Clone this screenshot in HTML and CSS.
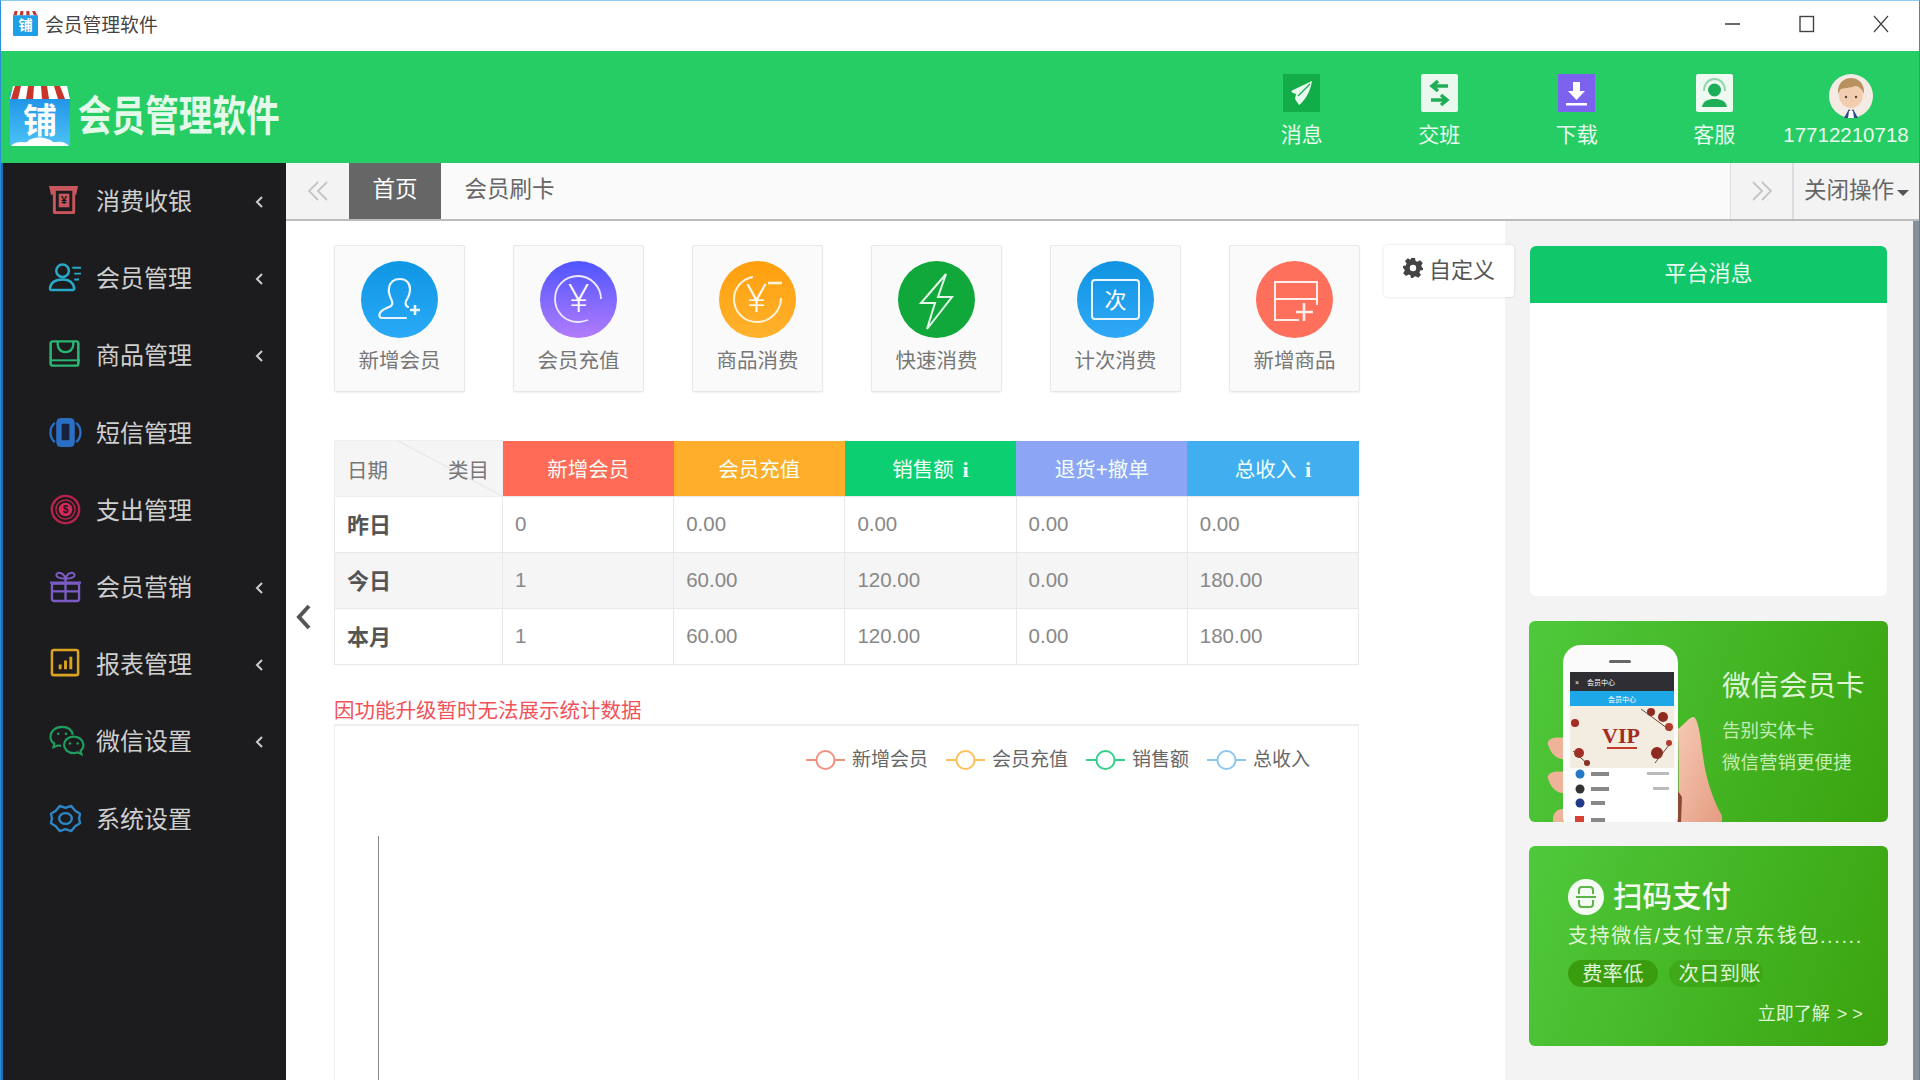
FILE: index.html
```html
<!DOCTYPE html>
<html lang="zh-CN">
<head>
<meta charset="UTF-8">
<title>会员管理软件</title>
<link rel="stylesheet" href="styles.css">
</head>
<body>
<div class="window">

    <div class="titlebar">
        <svg class="title-logo" viewBox="0 0 60 60">
            <rect y="6" width="60" height="54" rx="3" fill="#1f9fe8"/>
            <path d="M2 0h56l2 10H0z" fill="#fff"/>
            <path d="M4 0h7l-2 10H1zM18 0h7l-1 10h-8zM32 0h7l1 10h-8zM46 0h7l5 10h-8z" fill="#c8342c"/>
            <text x="30" y="46" class="logo-char">铺</text>
        </svg>
        <span class="title-text">会员管理软件</span>
        <div class="win-controls">
            <svg width="16" height="18" viewBox="0 0 16 18"><path d="M0 9h15" stroke="#444" stroke-width="1.6"/></svg>
            <svg width="16" height="18" viewBox="0 0 16 18"><rect x="1" y="1.5" width="13.5" height="15" fill="none" stroke="#444" stroke-width="1.4"/></svg>
            <svg width="16" height="18" viewBox="0 0 16 18"><path d="M1 1l14 16M15 1L1 17" stroke="#444" stroke-width="1.2"/></svg>
        </div>
    </div>

    <div class="header">
        <svg class="brand-logo" viewBox="0 0 60 60">
            <defs>
                <linearGradient id="logoBg" x1="0" y1="0" x2="0" y2="1">
                    <stop offset="0" stop-color="#1b8fe6"/>
                    <stop offset="1" stop-color="#4cc2f5"/>
                </linearGradient>
            </defs>
            <rect y="6" width="60" height="54" rx="2" fill="url(#logoBg)"/>
            <path d="M3 0h54l3 13H0z" fill="#fff"/>
            <path d="M5 0h6l-3 13H1zM18 0h6l-1 13h-7zM31 0h6l2 13h-7zM44 0h6l5 13h-7z" fill="#c8342c"/>
            <path d="M1 60c6-6 12-3 16-4 4-6 20-6 26 0 6 0 10-2 16 4z" fill="#fff"/>
            <text x="30" y="47" class="logo-char">铺</text>
        </svg>
        <div class="brand-name">会员管理软件</div>

        <div class="tools">
            <div class="tool">
                <svg class="tool-icon" viewBox="0 0 37 38">
                    <rect width="37" height="38" fill="#12ad48"/>
                    <path d="M29 7L10 16c-2 1-2 2 0 3l3 1-1 5 4 6c2-1 3-3 5-5 4-5 7-12 8-19z" fill="#eafaf0"/>
                    <path d="M27 10L15 22" stroke="#12ad48" stroke-width="1.2"/>
                </svg>
                <span>消息</span>
            </div>
            <div class="tool">
                <svg class="tool-icon" viewBox="0 0 37 38">
                    <rect width="37" height="38" rx="2" fill="#eaf8ef"/>
                    <path d="M27 12H13M17 7l-6 5 6 5" fill="none" stroke="#1fae58" stroke-width="3.4"/>
                    <path d="M10 26h14M20 21l6 5-6 5" fill="none" stroke="#1fae58" stroke-width="3.4"/>
                </svg>
                <span>交班</span>
            </div>
            <div class="tool">
                <svg class="tool-icon" viewBox="0 0 37 38">
                    <rect width="37" height="38" fill="#7d62f0"/>
                    <path d="M15 8h7v9h5l-8.500 9-8.500-9h5z" fill="#fff"/>
                    <rect x="8" y="29" width="21" height="2.500" fill="#fff"/>
                </svg>
                <span>下载</span>
            </div>
            <div class="tool">
                <svg class="tool-icon" viewBox="0 0 37 38">
                    <rect width="37" height="38" rx="2" fill="#eef9f2"/>
                    <circle cx="18.500" cy="16" r="6.500" fill="#1fae58"/>
                    <path d="M8 17c0-16 21-16 21 0" fill="none" stroke="#8ed8aa" stroke-width="2"/>
                    <path d="M6 33c1-6 6-8 12.500-8S30 27 31 33z" fill="#1fae58"/>
                </svg>
                <span>客服</span>
            </div>
            <div class="tool tool-user">
                <svg class="avatar" viewBox="0 0 44 44">
                    <ellipse cx="22" cy="22" rx="22" ry="22" fill="#f5ebe5"/>
                    <ellipse cx="22" cy="21" rx="12" ry="13" fill="#f3cdb0"/>
                    <path d="M9 20C8 8 16 4 22 4s14 4 13 16c-2-5-5-8-9-8-5 2-12 2-14 3-1 1-2 3-3 5z" fill="#b9915f"/>
                    <circle cx="17" cy="23" r="1.200" fill="#5c4433"/>
                    <circle cx="27" cy="23" r="1.200" fill="#5c4433"/>
                    <path d="M15 44l5-9 2 3 2-3 5 9z" fill="#2c4a8c"/>
                    <path d="M20 37h4l1 7h-6z" fill="#fff"/>
                </svg>
                <span>17712210718</span>
            </div>
        </div>
    </div>

    <div class="main">
        <ul class="sidebar">
            <li class="nav-item">
                <svg class="nav-icon" viewBox="0 0 34 32"><path d="M0 1h30l-2 9h-1v18a2 2 0 0 1-2 2H6a2 2 0 0 1-2-2V10H2z" fill="#c9565c"/><path d="M7 6h17v21H7z" fill="#1c1c1e"/><rect x="10" y="9" width="11" height="14" fill="#c9565c"/><text x="15.500" y="20" class="nav-coin">¥</text></svg>
                <span class="nav-label">消费收银</span>
                <svg class="nav-arrow" viewBox="0 0 8 12"><path d="M7 1L2 6l5 5" fill="none" stroke="#ccc" stroke-width="2"/></svg>
            </li>
            <li class="nav-item">
                <svg class="nav-icon" viewBox="0 0 34 32"><circle cx="14" cy="9" r="6.500" fill="none" stroke="#27a9c9" stroke-width="2.600"/><path d="M1 27c1-7 6-9 13-9 6 0 11 2 12 9 0 2-2 2-3 2H4c-2 0-3 0-3-2z" fill="none" stroke="#27a9c9" stroke-width="2.600"/><path d="M24 6h9M26 12h7M26 18h5" stroke="#27a9c9" stroke-width="2"/></svg>
                <span class="nav-label">会员管理</span>
                <svg class="nav-arrow" viewBox="0 0 8 12"><path d="M7 1L2 6l5 5" fill="none" stroke="#ccc" stroke-width="2"/></svg>
            </li>
            <li class="nav-item">
                <svg class="nav-icon" viewBox="0 0 34 32"><rect x="1.500" y="2.500" width="26" height="25" rx="2" fill="none" stroke="#2bb673" stroke-width="2.400" transform="scale(1.100 1)"/><path d="M2 22h30" stroke="#2bb673" stroke-width="2"/><path d="M9 3v3c0 10 16 10 16 0V3" fill="none" stroke="#2bb673" stroke-width="2.400"/></svg>
                <span class="nav-label">商品管理</span>
                <svg class="nav-arrow" viewBox="0 0 8 12"><path d="M7 1L2 6l5 5" fill="none" stroke="#ccc" stroke-width="2"/></svg>
            </li>
            <li class="nav-item">
                <svg class="nav-icon" viewBox="0 0 34 32"><rect x="8" y="1.500" width="18" height="29" rx="4" fill="#2a6fc4" stroke="#2a6fc4"/><rect x="13" y="7" width="8" height="17" rx="1" fill="#16233a"/><path d="M6 6C0 11 0 21 6 26M28 6c6 5 6 15 0 20" fill="none" stroke="#2a6fc4" stroke-width="2.400"/></svg>
                <span class="nav-label">短信管理</span>
            </li>
            <li class="nav-item">
                <svg class="nav-icon" viewBox="0 0 34 34"><circle cx="17" cy="17" r="15" fill="none" stroke="#b9224c" stroke-width="2.600"/><circle cx="17" cy="17" r="10.500" fill="none" stroke="#b9224c" stroke-width="1.600"/><circle cx="17" cy="17" r="7.500" fill="#d8285a"/><text x="17" y="21" class="nav-coin">$</text></svg>
                <span class="nav-label">支出管理</span>
            </li>
            <li class="nav-item">
                <svg class="nav-icon" viewBox="0 0 34 32"><rect x="3" y="13" width="28" height="18" rx="2" fill="none" stroke="#7c5cc4" stroke-width="2.400"/><path d="M1 12h32M17 6v25M3 21h28" stroke="#7c5cc4" stroke-width="2.400"/><path d="M17 8C11 8 6 6 8 3s8 0 9 5c1-5 7-8 9-5s-3 5-9 5z" fill="none" stroke="#7c5cc4" stroke-width="2"/></svg>
                <span class="nav-label">会员营销</span>
                <svg class="nav-arrow" viewBox="0 0 8 12"><path d="M7 1L2 6l5 5" fill="none" stroke="#ccc" stroke-width="2"/></svg>
            </li>
            <li class="nav-item">
                <svg class="nav-icon" viewBox="0 0 34 32"><rect x="3" y="2" width="27" height="26" rx="2" fill="none" stroke="#d9a520" stroke-width="2.600"/><path d="M10 17h3v5h-3zM15.500 13h3v9h-3zM21 9h3v13h-3z" fill="#d9a520"/></svg>
                <span class="nav-label">报表管理</span>
                <svg class="nav-arrow" viewBox="0 0 8 12"><path d="M7 1L2 6l5 5" fill="none" stroke="#ccc" stroke-width="2"/></svg>
            </li>
            <li class="nav-item">
                <svg class="nav-icon" viewBox="0 0 33 32"><path d="M13 2C6 2 1 6.500 1 12c0 3 2 6 4 7l-1 4 5-2c1 .500 2 .500 3 .500" fill="none" stroke="#1f9e5f" stroke-width="2.200"/><path d="M25 12c-6 0-10 4-10 8.500S19 29 25 29c1.500 0 3-.300 4-.800l4 2-1-3.500c2-1.500 3-3.500 3-6C35 16 31 12 25 12zM24 10c-1-5-5-8-11-8" fill="none" stroke="#1f9e5f" stroke-width="2.200"/><circle cx="9" cy="9" r="1.300" fill="#1f9e5f"/><circle cx="17" cy="9" r="1.300" fill="#1f9e5f"/><circle cx="21" cy="19" r="1.300" fill="#1f9e5f"/><circle cx="29" cy="19" r="1.300" fill="#1f9e5f"/></svg>
                <span class="nav-label">微信设置</span>
                <svg class="nav-arrow" viewBox="0 0 8 12"><path d="M7 1L2 6l5 5" fill="none" stroke="#ccc" stroke-width="2"/></svg>
            </li>
            <li class="nav-item">
                <svg class="nav-icon" viewBox="0 0 34 32"><path d="M11 3l6 2 6-2 4 5 5 3-1 5 1 5-5 3-4 5-6-2-6 2-4-5-5-3 1-5-1-5 5-3z" fill="none" stroke="#2f86c6" stroke-width="2.400" stroke-linejoin="round"/><ellipse cx="17" cy="16" rx="6.500" ry="5.500" fill="none" stroke="#2f86c6" stroke-width="2.400"/></svg>
                <span class="nav-label">系统设置</span>
            </li>
        </ul>

        <div class="content">
            <div class="tabbar">
                <div class="tab-nav">
                    <svg width="22" height="20" viewBox="0 0 22 20"><path d="M11 1L2 10l9 9M20 1l-9 9 9 9" fill="none" stroke="#c4c4c4" stroke-width="1.800"/></svg>
                </div>
                <div class="tab tab-active">首页</div>
                <div class="tab">会员刷卡</div>
                <div class="tab-spacer"></div>
                <div class="tab-nav tab-nav-right">
                    <svg width="22" height="20" viewBox="0 0 22 20"><path d="M2 1l9 9-9 9M11 1l9 9-9 9" fill="none" stroke="#c4c4c4" stroke-width="1.800"/></svg>
                </div>
                <div class="tab-close">关闭操作<i class="caret"></i></div>
            </div>

            <div class="body">
                <div class="center">
                    <svg class="collapse" width="16" height="26" viewBox="0 0 16 26"><path d="M13 2L3 13l10 11" fill="none" stroke="#555" stroke-width="4"/></svg>

                    <div class="shortcuts">
                        <div class="tile">
                            <svg class="tile-icon" viewBox="0 0 77 77">
                                <defs><linearGradient id="gBlue" x1="0" y1="0" x2="0" y2="1"><stop offset="0" stop-color="#0f96e4"/><stop offset="1" stop-color="#29aaf6"/></linearGradient></defs>
                                <circle cx="38.500" cy="38.500" r="38.500" fill="url(#gBlue)"/>
                                <path d="M45 57H21c-3 0-3-3-2-5 1-3 5-4 9-6 3-1 4-3 3-6-2-4-4-8-3-13 1-6 5-9 11-9s10 4 10 10c0 5-2 9-4 12-1 3 0 5 2 6" fill="none" stroke="#eaf6ff" stroke-width="2.200" stroke-linecap="round"/>
                                <path d="M54 44v10M49 49h10" stroke="#eaf6ff" stroke-width="2.600"/>
                            </svg>
                            <span>新增会员</span>
                        </div>
                        <div class="tile">
                            <svg class="tile-icon" viewBox="0 0 77 77">
                                <defs><linearGradient id="gPurple" x1="0" y1="0" x2="0" y2="1"><stop offset="0" stop-color="#4f55ff"/><stop offset="1" stop-color="#b27cfb"/></linearGradient></defs>
                                <circle cx="38.500" cy="38.500" r="38.500" fill="url(#gPurple)"/>
                                <path d="M61 38C61 26 51 15 38 15S15 25 15 38s10 23 23 23c4 0 7-1 10-2" fill="none" stroke="#efe9ff" stroke-width="1.800"/>
                                <text x="38.500" y="51" class="tile-glyph">¥</text>
                            </svg>
                            <span>会员充值</span>
                        </div>
                        <div class="tile">
                            <svg class="tile-icon" viewBox="0 0 77 77">
                                <defs><linearGradient id="gOrange" x1="0" y1="0" x2="0" y2="1"><stop offset="0" stop-color="#ff9f0d"/><stop offset="1" stop-color="#ffb22d"/></linearGradient></defs>
                                <circle cx="38.500" cy="38.500" r="38.500" fill="url(#gOrange)"/>
                                <path d="M34 16C23 18 15 27 15 38c0 13 10 23 23 23s24-11 24-24" fill="none" stroke="#fff3dc" stroke-width="2"/>
                                <path d="M49 22h14" stroke="#fff3dc" stroke-width="2.600"/>
                                <text x="37.500" y="51" class="tile-glyph">¥</text>
                            </svg>
                            <span>商品消费</span>
                        </div>
                        <div class="tile">
                            <svg class="tile-icon" viewBox="0 0 77 77">
                                <circle cx="38.500" cy="38.500" r="38.500" fill="#10a83a"/>
                                <path d="M48 13L23 42h14l-8 26 25-32H40z" fill="none" stroke="#e6f8eb" stroke-width="2"/>
                            </svg>
                            <span>快速消费</span>
                        </div>
                        <div class="tile">
                            <svg class="tile-icon" viewBox="0 0 77 77">
                                <defs><linearGradient id="gBlue2" x1="0" y1="0" x2="0" y2="1"><stop offset="0" stop-color="#1093e2"/><stop offset="1" stop-color="#30a9f7"/></linearGradient></defs>
                                <circle cx="38.500" cy="38.500" r="38.500" fill="url(#gBlue2)"/>
                                <rect x="15" y="19" width="47" height="39" rx="3" fill="none" stroke="#e9f6ff" stroke-width="2"/>
                                <text x="38.500" y="47" class="tile-char">次</text>
                            </svg>
                            <span>计次消费</span>
                        </div>
                        <div class="tile">
                            <svg class="tile-icon" viewBox="0 0 77 77">
                                <circle cx="38.500" cy="38.500" r="38.500" fill="#ff705c"/>
                                <path d="M61 44V21H19v38h24M19 38h42" fill="none" stroke="#ffeee9" stroke-width="2"/>
                                <path d="M48 42v18M40 51h17" stroke="#ffeee9" stroke-width="2.600"/>
                            </svg>
                            <span>新增商品</span>
                        </div>
                        <div class="customize">
                            <svg width="20" height="20" viewBox="0 0 20 20"><path d="M8 0h4l.6 3 1.800.8L17 2.200 19.800 5 18.200 7.600 19 9.400 20 10v2l-2.800.600-.8 1.800 1.600 2.600-2.800 2.800-2.600-1.600-1.800.8L10 20H8l-.6-2.800-1.800-.8L3 18 .2 15.200 1.800 12.600 1 10.800 0 10V8l2.800-.6.800-1.800L2 3 4.800.2l2.600 1.600L8 1z" fill="#444"/><circle cx="10" cy="10" r="3.200" fill="#fff"/></svg>
                            <span>自定义</span>
                        </div>
                    </div>

                    <table class="stats">
                        <thead>
                            <tr>
                                <th class="corner">
                                    <svg class="corner-line" viewBox="0 0 169 56" preserveAspectRatio="none"><path d="M64 0L169 56" stroke="#e4e4e4"/></svg>
                                    <span class="corner-labels"><span>日期</span><span>类目</span></span>
                                </th>
                                <th class="th-red">新增会员</th>
                                <th class="th-orange">会员充值</th>
                                <th class="th-green">销售额 <b class="info">i</b></th>
                                <th class="th-violet">退货+撤单</th>
                                <th class="th-blue">总收入 <b class="info">i</b></th>
                            </tr>
                        </thead>
                        <tbody>
                            <tr><th>昨日</th><td>0</td><td>0.00</td><td>0.00</td><td>0.00</td><td>0.00</td></tr>
                            <tr class="striped"><th>今日</th><td>1</td><td>60.00</td><td>120.00</td><td>0.00</td><td>180.00</td></tr>
                            <tr><th>本月</th><td>1</td><td>60.00</td><td>120.00</td><td>0.00</td><td>180.00</td></tr>
                        </tbody>
                    </table>

                    <div class="notice">因功能升级暂时无法展示统计数据</div>

                    <div class="chart">
                        <div class="legend">
                            <div class="legend-item"><svg width="39" height="24" viewBox="0 0 39 24"><path d="M0 12h39" stroke="#f0907f" stroke-width="2"/><circle cx="19.500" cy="12" r="9" fill="#fff" stroke="#f0907f" stroke-width="2"/></svg><span>新增会员</span></div>
                            <div class="legend-item"><svg width="39" height="24" viewBox="0 0 39 24"><path d="M0 12h39" stroke="#ffc05a" stroke-width="2"/><circle cx="19.500" cy="12" r="9" fill="#fff" stroke="#ffc05a" stroke-width="2"/></svg><span>会员充值</span></div>
                            <div class="legend-item"><svg width="39" height="24" viewBox="0 0 39 24"><path d="M0 12h39" stroke="#35cf8c" stroke-width="2"/><circle cx="19.500" cy="12" r="9" fill="#fff" stroke="#35cf8c" stroke-width="2"/></svg><span>销售额</span></div>
                            <div class="legend-item"><svg width="39" height="24" viewBox="0 0 39 24"><path d="M0 12h39" stroke="#8cc8ee" stroke-width="2"/><circle cx="19.500" cy="12" r="9" fill="#fff" stroke="#8cc8ee" stroke-width="2"/></svg><span>总收入</span></div>
                        </div>
                        <div class="axis"></div>
                    </div>
                </div>

                <div class="panel">
                    <div class="msg-card">
                        <div class="msg-head">平台消息</div>
                    </div>

                    <div class="banner banner-card">
                        <svg class="phone-art" viewBox="0 0 193 201">
                            <defs>
                                <linearGradient id="skin" x1="0" y1="0" x2="1" y2="1">
                                    <stop offset="0" stop-color="#f6c9b4"/>
                                    <stop offset="1" stop-color="#e49a80"/>
                                </linearGradient>
                            </defs>
                            <path d="M20 126c-4-6 2-11 14-9v21c-7 0-12-6-14-12zM20 160c-4-6 2-11 14-9v21c-7 0-12-6-14-12zM24 198c0-6 4-10 10-10v13H24z" fill="#efb39a"/>
                            <path d="M149 201c1-21 1-61 0-93 6-4 11-12 16-12 5 4 7 24 9 39 3 25 12 50 23 66z" fill="url(#skin)"/>
                            <path d="M149 170l4 6-1 25h-4z" fill="#8a4a36"/>
                            <rect x="34" y="24" width="115" height="190" rx="18" fill="#fbfbfb"/>
                            <rect x="80" y="39" width="22" height="3" rx="1.500" fill="#666"/>
                            <rect x="41" y="51" width="104" height="150" fill="#fff"/>
                            <rect x="41" y="51" width="104" height="19" fill="#2e2e33"/>
                            <text x="46" y="64" class="art-small art-white">×</text>
                            <text x="58" y="64" class="art-small art-white">会员中心</text>
                            <rect x="41" y="70" width="104" height="15" fill="#1ea7e6"/>
                            <text x="93" y="81" class="art-small art-white art-mid">会员中心</text>
                            <rect x="41" y="85" width="104" height="62" fill="#f3ece0"/>
                            <circle cx="46" cy="102" r="4" fill="#a32c24"/><circle cx="50" cy="132" r="5" fill="#a32c24"/><circle cx="58" cy="142" r="3" fill="#8f2a20"/>
                            <circle cx="122" cy="91" r="4" fill="#8f2a20"/><circle cx="134" cy="96" r="5" fill="#8f2a20"/><circle cx="140" cy="106" r="4" fill="#b5392c"/><circle cx="128" cy="132" r="6" fill="#8f2a20"/><circle cx="140" cy="122" r="3" fill="#b5392c"/>
                            <path d="M44 130l16 14M112 88l30 22M126 142l14-18" stroke="#6d4a30" stroke-width="1" fill="none"/>
                            <text x="92" y="122" class="art-vip">VIP</text>
                            <rect x="78" y="126" width="30" height="2" fill="#c0392b"/>
                            <circle cx="51" cy="153" r="4.500" fill="#2578c6"/><rect x="62" y="151" width="18" height="4" fill="#888"/><rect x="118" y="151" width="22" height="3" fill="#bbb"/>
                            <circle cx="51" cy="168" r="4.500" fill="#333"/><rect x="62" y="166" width="18" height="4" fill="#888"/><rect x="124" y="166" width="16" height="3" fill="#bbb"/>
                            <circle cx="51" cy="182" r="4.500" fill="#223a8c"/><rect x="62" y="180" width="14" height="4" fill="#888"/>
                            <rect x="46" y="195" width="9" height="6" fill="#d8402f"/><rect x="62" y="197" width="14" height="4" fill="#888"/>
                        </svg>
                        <div class="card-copy">
                            <div class="card-title">微信会员卡</div>
                            <div class="card-sub">告别实体卡</div>
                            <div class="card-sub">微信营销更便捷</div>
                        </div>
                    </div>

                    <div class="banner banner-pay">
                        <div class="pay-head">
                            <svg width="36" height="36" viewBox="0 0 36 36"><circle cx="18" cy="18" r="18" fill="#f4fbf2"/><path d="M11 15v-4a3 3 0 0 1 3-3h8a3 3 0 0 1 3 3v4M11 21v4a3 3 0 0 0 3 3h8a3 3 0 0 0 3-3v-4" fill="none" stroke="#5db54a" stroke-width="2"/><path d="M8 18h20" stroke="#5db54a" stroke-width="2"/></svg>
                            <span>扫码支付</span>
                        </div>
                        <div class="pay-sub">支持微信/支付宝/京东钱包......</div>
                        <div class="pay-tags">
                            <span class="pill">费率低</span>
                            <span class="pill pill-soft">次日到账</span>
                        </div>
                        <div class="pay-more">立即了解 <span class="more-arrows">&gt; &gt;</span></div>
                    </div>
                </div>

                <div class="scrollbar"></div>
            </div>
        </div>
    </div>
</div>
</body>
</html>
```

FILE: styles.css
```css
* {
    box-sizing: border-box;
}

html, body {
    margin: 0;
    padding: 0;
    height: 100%;
    overflow: hidden;
}

body {
    font-family: "Liberation Sans", "Noto Sans CJK SC", sans-serif;
    background-color: #fff;
    color: #555;
}

.window {
    width: 1920px;
    height: 1080px;
    display: flex;
    flex-direction: column;
    overflow: hidden;
    border: 1px solid #2a8fd8;
    border-top-color: #8cc9ef;
    border-bottom: none;
}

/* title bar */
.titlebar {
    height: 50px;
    flex: none;
    display: flex;
    align-items: center;
    padding: 0 0 5px 12px;
    background-color: #fff;
}

.title-logo {
    width: 25px;
    height: 25px;
    margin-right: 7px;
}

.title-text {
    font-size: 18.8px;
    color: #444;
}

.win-controls {
    margin-left: auto;
    margin-right: 30px;
    display: flex;
    gap: 58px;
}

.logo-char {
    font-family: "Noto Sans CJK SC", sans-serif;
    font-size: 34px;
    font-weight: 700;
    fill: #fff;
    text-anchor: middle;
}

/* green header */
.header {
    height: 112px;
    flex: none;
    display: flex;
    align-items: center;
    background-color: #25cd64;
    padding-left: 9px;
}

.brand-logo {
    width: 60px;
    height: 60px;
    margin-top: 18px;
}

.brand-name {
    width: 204px;
    margin-left: 8px;
    margin-top: 20px;
    font-size: 42px;
    font-weight: 700;
    line-height: 50px;
    color: #e4f9ea;
    white-space: nowrap;
    transform: scaleX(0.8);
    transform-origin: left center;
}

.tools {
    margin-left: auto;
    margin-top: 8px;
    display: flex;
    align-items: flex-start;
    padding-right: 10px;
}

.tool {
    width: 137.5px;
    display: flex;
    flex-direction: column;
    align-items: center;
    font-size: 21px;
    line-height: 28px;
    color: #eafbef;
}

.tool-icon {
    width: 37px;
    height: 38px;
    margin-bottom: 9px;
}

.tool-user {
    width: 126px;
    font-size: 20.5px;
    white-space: nowrap;
}

.avatar {
    width: 44px;
    height: 44px;
    margin-bottom: 3px;
    margin-left: 10px;
}

/* sidebar */
.main {
    flex: 1;
    display: flex;
    min-height: 0;
}

.sidebar {
    width: 285px;
    flex: none;
    list-style: none;
    margin: 0;
    padding: 0;
    background-color: #1c1c1e;
    border-left: 2px solid #1c6db4;
}

.nav-item {
    height: 77.2px;
    display: flex;
    align-items: center;
    color: #cfcfcf;
    font-size: 24px;
    padding-left: 46px;
}

.nav-icon {
    width: 33px;
    height: 31px;
    flex: none;
    margin-right: 14px;
    margin-bottom: 2px;
    overflow: visible;
}

.nav-coin {
    font-size: 11px;
    font-weight: 700;
    fill: #16161a;
    text-anchor: middle;
}

.nav-label {
    flex: 1;
    padding-bottom: 4px;
}

.nav-arrow {
    width: 8px;
    height: 12px;
    margin-right: 23px;
}

/* tabs */
.content {
    flex: 1;
    min-width: 0;
    display: flex;
    flex-direction: column;
}

.tabbar {
    height: 58px;
    flex: none;
    display: flex;
    background-color: #fafafa;
    border-bottom: 2px solid #bbb;
    font-size: 22.5px;
    line-height: 53px;
}

.tab-nav {
    width: 63px;
    display: flex;
    align-items: center;
    justify-content: center;
    background-color: #f3f3f3;
}

.tab-nav-right {
    width: 62px;
    border-left: 1px solid #ddd;
}

.tab {
    padding: 0 23.5px;
    color: #666;
}

.tab-active {
    background-color: #666;
    color: #fff;
}

.tab-spacer {
    flex: 1;
}

.tab-close {
    width: 127px;
    padding-left: 10px;
    background-color: #f3f3f3;
    border-left: 2px solid #ddd;
    color: #666;
    white-space: nowrap;
    line-height: 56px;
}

.caret {
    display: inline-block;
    margin-left: 3px;
    vertical-align: 2px;
    border-left: 6px solid transparent;
    border-right: 6px solid transparent;
    border-top: 6px solid #555;
}

/* page body */
.body {
    flex: 1;
    min-height: 0;
    display: flex;
}

.center {
    width: 1219px;
    flex: none;
    position: relative;
    z-index: 1;
    padding: 24px 0 0 48px;
    background-color: #fff;
}

.collapse {
    position: absolute;
    left: 10px;
    top: 383px;
}

.shortcuts {
    display: flex;
    align-items: flex-start;
    gap: 48px;
}

.tile {
    width: 131px;
    height: 147px;
    flex: none;
    display: flex;
    flex-direction: column;
    align-items: center;
    padding-top: 15px;
    background-color: #fafafa;
    border: 1px solid #e8e8e8;
    border-radius: 2px;
    box-shadow: 0 1px 2px rgba(0, 0, 0, 0.06);
    font-size: 20.5px;
    line-height: 28px;
    color: #777;
}

.tile-icon {
    width: 77px;
    height: 77px;
    margin-bottom: 9px;
    flex: none;
}

.tile-glyph {
    font-family: "Open Sans", sans-serif;
    font-size: 38px;
    font-weight: 300;
    fill: #fff;
    text-anchor: middle;
}

.tile-char {
    font-family: "Noto Sans CJK SC", sans-serif;
    font-size: 22px;
    fill: #fff;
    text-anchor: middle;
}

.customize {
    width: 130px;
    height: 52px;
    flex: none;
    margin-left: -24px;
    display: flex;
    align-items: center;
    justify-content: center;
    gap: 6px;
    padding-bottom: 6px;
    background-color: #fff;
    border-radius: 4px;
    box-shadow: 0 0 3px rgba(0, 0, 0, 0.14);
    font-size: 22px;
    color: #555;
}

/* table */
.stats {
    width: 1025px;
    margin-top: 48px;
    border-collapse: collapse;
    table-layout: fixed;
    font-size: 20.5px;
}

.stats thead th {
    height: 56px;
    padding: 0;
    font-size: 20.5px;
    font-weight: 400;
    color: #f4fff8;
}

.stats tbody th,
.stats td {
    height: 56px;
    border: 1px solid #e8e8e8;
}

.stats tbody th {
    padding: 0 0 4px 12px;
    text-align: left;
    font-size: 22px;
    font-weight: 700;
    color: #555;
}

.stats td {
    padding: 0 0 1px 12px;
    color: #888;
}

.stats thead .corner {
    width: 168px;
    position: relative;
    background-color: #f5f5f5;
    border: 1px solid #eee;
    color: #777;
}

.corner-line {
    position: absolute;
    left: 0;
    top: 0;
    width: 100%;
    height: 100%;
}

.corner-labels {
    position: relative;
    display: flex;
    justify-content: space-between;
    padding: 0 13px 0 12px;
}

.th-red { background-color: #ff6b57; }
.th-orange { background-color: #ffae2b; }
.th-green { background-color: #0ccf72; }
.th-violet { background-color: #8ca5f5; }
.th-blue { background-color: #41aef0; }

.info {
    font-family: "Liberation Serif", serif;
    font-size: 22px;
    font-weight: 700;
    margin-left: 3px;
}

.striped {
    background-color: #f5f5f5;
}

.notice {
    margin-top: 31px;
    height: 28px;
    line-height: 30px;
    font-size: 20.5px;
    color: #f0525a;
}

/* chart */
.chart {
    width: 1025px;
    height: 400px;
    padding: 22px 48px 0 43px;
    border: 1px solid #eee;
    border-top-width: 2px;
}

.legend {
    display: flex;
    justify-content: flex-end;
    gap: 18px;
    font-size: 19px;
    line-height: 24px;
    color: #666;
}

.legend-item {
    display: flex;
    align-items: center;
    gap: 7px;
}

.axis {
    width: 1px;
    height: 300px;
    margin-top: 64px;
    background-color: #888;
}

/* right column */
.panel {
    flex: 1;
    padding: 25px 25px 0 24px;
    background-color: #f3f3f3;
}

.msg-card {
    height: 350px;
    margin: 0 1px;
    background-color: #fff;
    border-radius: 6px;
    overflow: hidden;
}

.msg-head {
    height: 57px;
    line-height: 56px;
    text-align: center;
    font-size: 22px;
    color: #eafbef;
    background-color: #10c76a;
}

.banner {
    border-radius: 6px;
    overflow: hidden;
    background: linear-gradient(110deg, #4fc93c, #3aa30e);
    color: #dff5d6;
}

.banner-card {
    height: 201px;
    margin-top: 25px;
    display: flex;
}

.phone-art {
    width: 193px;
    height: 201px;
    flex: none;
}

.art-small {
    font-size: 7px;
}

.art-white {
    fill: #fff;
}

.art-mid {
    text-anchor: middle;
}

.art-vip {
    font-family: "Liberation Serif", serif;
    font-size: 22px;
    font-weight: 700;
    fill: #a32c24;
    text-anchor: middle;
}

.card-copy {
    padding-top: 46px;
}

.card-title {
    font-size: 28.5px;
    line-height: 38px;
    margin-bottom: 10px;
}

.card-sub {
    font-size: 18.5px;
    line-height: 32px;
    color: #c5ecb5;
    white-space: nowrap;
}

.banner-pay {
    height: 200px;
    margin-top: 24px;
    padding: 32px 25px 0 39px;
}

.pay-head {
    display: flex;
    align-items: center;
    gap: 9px;
    font-size: 29.5px;
    font-weight: 500;
    line-height: 38px;
    color: #f2fbee;
}

.pay-sub {
    margin-top: 5px;
    font-size: 20px;
    line-height: 30px;
    letter-spacing: 1.6px;
    white-space: nowrap;
}

.pay-tags {
    margin-top: 9px;
    display: flex;
    gap: 11px;
    font-size: 20.5px;
}

.pill {
    height: 27px;
    line-height: 27px;
    padding: 0 14px;
    border-radius: 14px;
    background-color: #3a9d10;
}

.pill-soft {
    padding: 0 2px 0 10px;
    background-color: rgba(58, 157, 16, 0.55);
}

.pay-more {
    margin-top: 14px;
    text-align: right;
    font-size: 18px;
    line-height: 26px;
}

.more-arrows {
    margin-left: 2px;
}

.scrollbar {
    width: 7px;
    flex: none;
    background-color: #85909b;
}
```
